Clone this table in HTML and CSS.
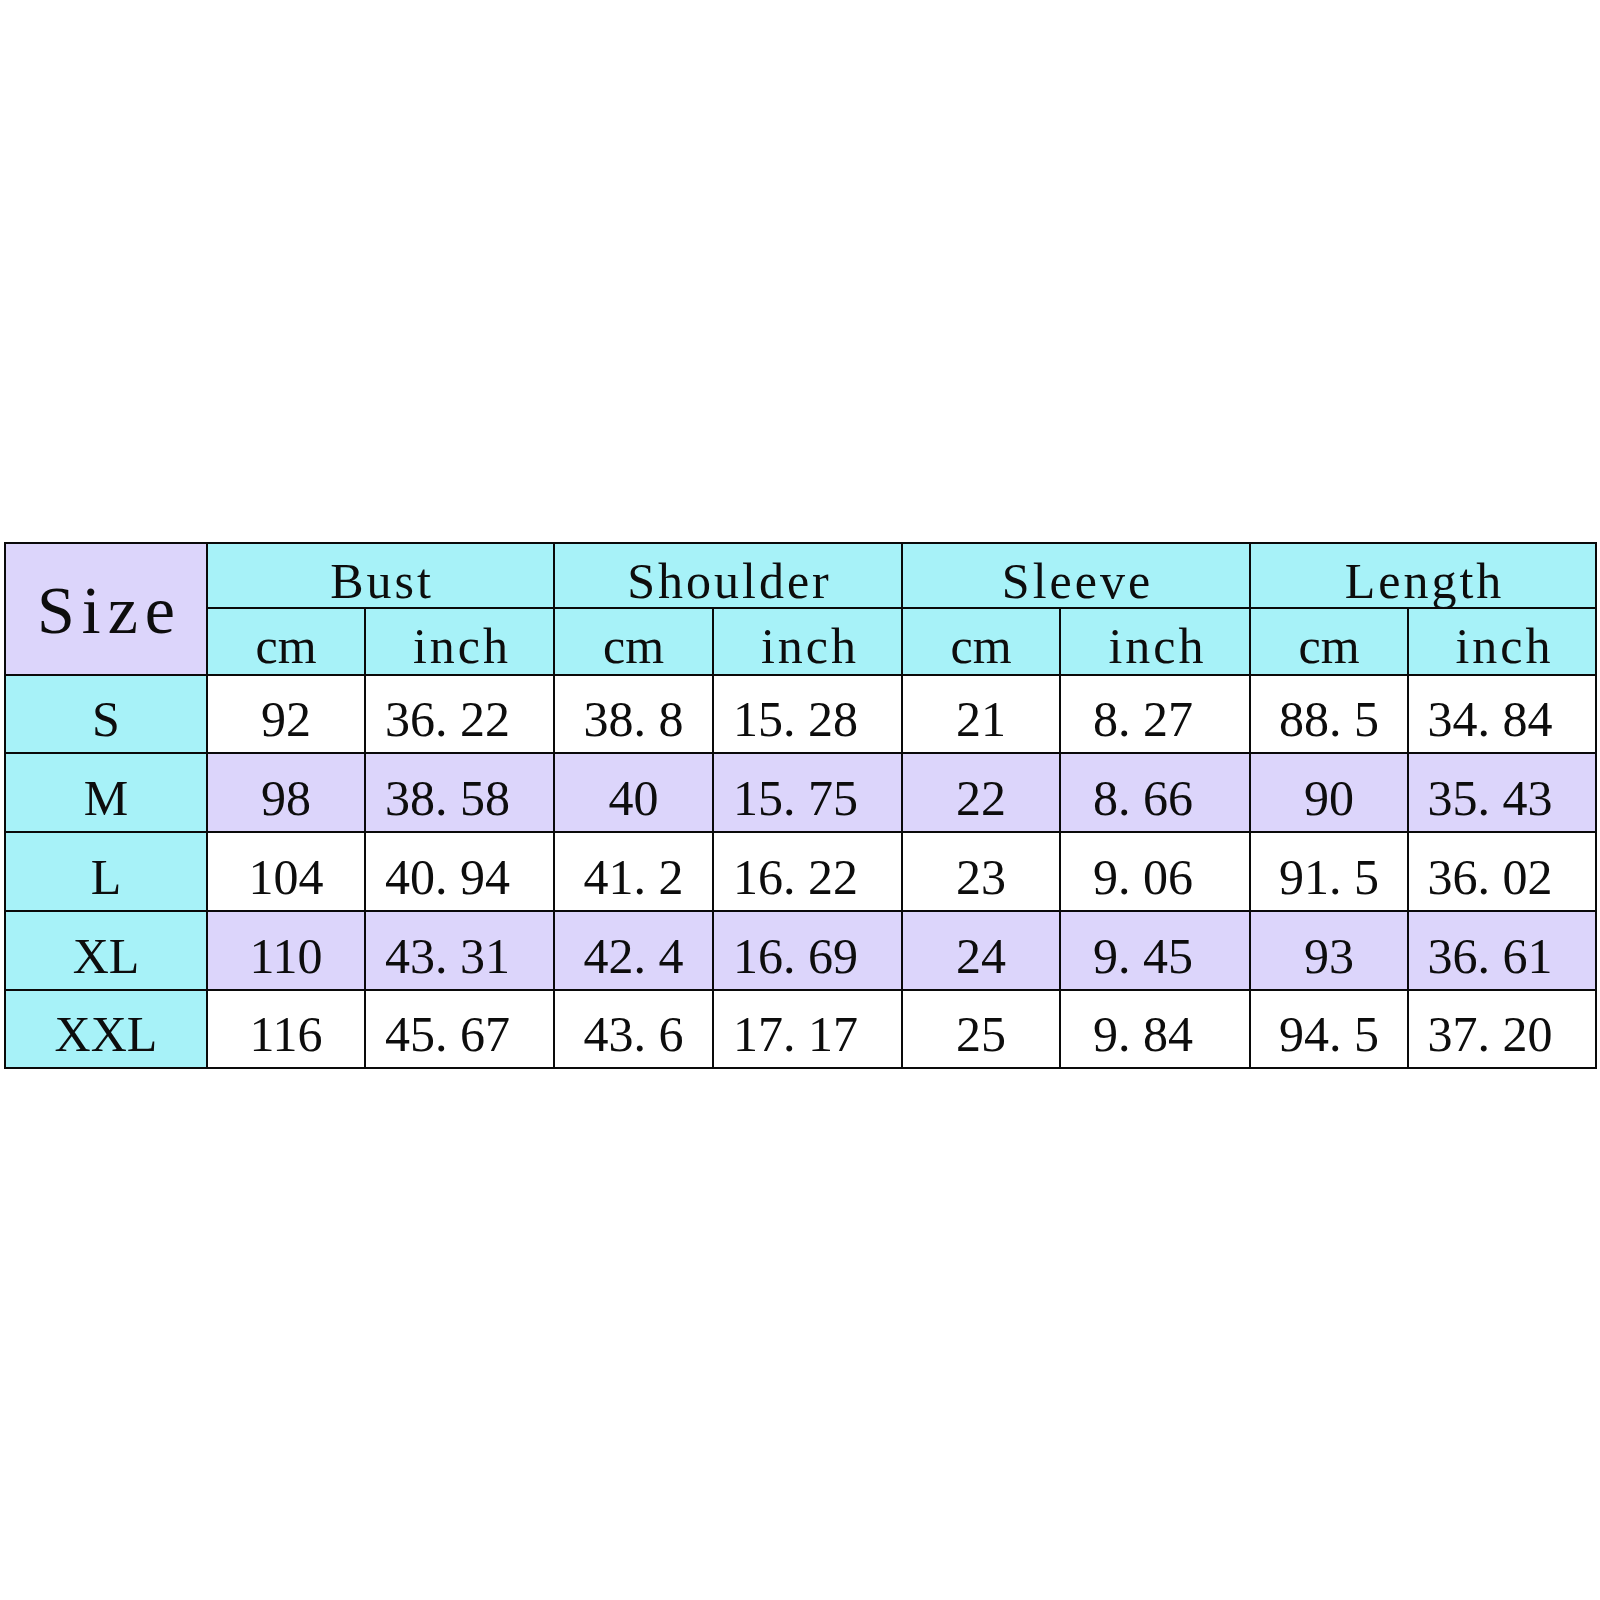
FILE: index.html
```html
<!DOCTYPE html>
<html>
<head>
<meta charset="utf-8">
<link rel="stylesheet" href="styles.css">
</head>
<body>
<div class="chart">
  <div class="cell size-head">Size</div>
  <div class="cell group">Bust</div>
  <div class="cell group">Shoulder</div>
  <div class="cell group">Sleeve</div>
  <div class="cell group">Length</div>
  <div class="cell unit cm">cm</div>
  <div class="cell unit in">inch</div>
  <div class="cell unit cm">cm</div>
  <div class="cell unit in">inch</div>
  <div class="cell unit cm">cm</div>
  <div class="cell unit in">inch</div>
  <div class="cell unit cm">cm</div>
  <div class="cell unit in">inch</div>

  <div class="cell label">S</div>
  <div class="cell val">92</div>
  <div class="cell val inch">36<span class="dot">.</span>22</div>
  <div class="cell val">38<span class="dot">.</span>8</div>
  <div class="cell val inch">15<span class="dot">.</span>28</div>
  <div class="cell val">21</div>
  <div class="cell val inch">8<span class="dot">.</span>27</div>
  <div class="cell val">88<span class="dot">.</span>5</div>
  <div class="cell val inch">34<span class="dot">.</span>84</div>

  <div class="cell label">M</div>
  <div class="cell val alt">98</div>
  <div class="cell val alt inch">38<span class="dot">.</span>58</div>
  <div class="cell val alt">40</div>
  <div class="cell val alt inch">15<span class="dot">.</span>75</div>
  <div class="cell val alt">22</div>
  <div class="cell val alt inch">8<span class="dot">.</span>66</div>
  <div class="cell val alt">90</div>
  <div class="cell val alt inch">35<span class="dot">.</span>43</div>

  <div class="cell label">L</div>
  <div class="cell val">104</div>
  <div class="cell val inch">40<span class="dot">.</span>94</div>
  <div class="cell val">41<span class="dot">.</span>2</div>
  <div class="cell val inch">16<span class="dot">.</span>22</div>
  <div class="cell val">23</div>
  <div class="cell val inch">9<span class="dot">.</span>06</div>
  <div class="cell val">91<span class="dot">.</span>5</div>
  <div class="cell val inch">36<span class="dot">.</span>02</div>

  <div class="cell label">XL</div>
  <div class="cell val alt">110</div>
  <div class="cell val alt inch">43<span class="dot">.</span>31</div>
  <div class="cell val alt">42<span class="dot">.</span>4</div>
  <div class="cell val alt inch">16<span class="dot">.</span>69</div>
  <div class="cell val alt">24</div>
  <div class="cell val alt inch">9<span class="dot">.</span>45</div>
  <div class="cell val alt">93</div>
  <div class="cell val alt inch">36<span class="dot">.</span>61</div>

  <div class="cell label">XXL</div>
  <div class="cell val">116</div>
  <div class="cell val inch">45<span class="dot">.</span>67</div>
  <div class="cell val">43<span class="dot">.</span>6</div>
  <div class="cell val inch">17<span class="dot">.</span>17</div>
  <div class="cell val">25</div>
  <div class="cell val inch">9<span class="dot">.</span>84</div>
  <div class="cell val">94<span class="dot">.</span>5</div>
  <div class="cell val inch">37<span class="dot">.</span>20</div>
</div>
</body>
</html>
```

FILE: styles.css
```css
html, body {
  margin: 0;
  padding: 0;
  background: #ffffff;
}

body {
  width: 1600px;
  height: 1600px;
  padding-top: 542px;
  padding-left: 4px;
  box-sizing: border-box;
}

.chart {
  display: grid;
  grid-template-columns: 200px 156px 187px 157px 187px 156px 188px 156px 186px;
  grid-template-rows: 63px 65px 76px 77px 77px 77px 76px;
  gap: 2px;
  padding: 2px;
  width: max-content;
  background: #0a0a0a;
  font-family: "Liberation Serif", "Times New Roman", serif;
  color: #0d0d0d;
}

.cell {
  display: flex;
  align-items: flex-end;
  justify-content: center;
  font-size: 50px;
  line-height: 50px;
  background: #ffffff;
  white-space: nowrap;
}

.size-head {
  grid-row: 1 / span 2;
  background: #dcd5fb;
  font-size: 68px;
  line-height: 68px;
  letter-spacing: 7px;
  padding-bottom: 30px;
  padding-left: 7px;
}

.group {
  grid-column: span 2;
  background: #a7f2f8;
  letter-spacing: 3px;
  padding-bottom: 1px;
  padding-left: 3px;
}

.unit {
  background: #a7f2f8;
  padding-bottom: 3px;
}

.unit.in {
  letter-spacing: 3px;
  padding-left: 5px;
}

.label {
  background: #a7f2f8;
  padding-bottom: 8px;
}

.val {
  padding-bottom: 8px;
}

.val.alt {
  background: #dcd5fb;
}

.val.inch {
  padding-right: 24px;
}

.dot {
  margin-right: 0.25em;
}
```
